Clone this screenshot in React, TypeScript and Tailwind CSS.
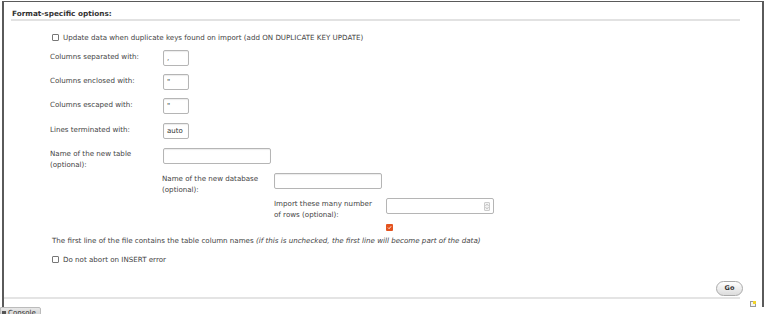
import React from 'react';

const Box = ({ className = '', value = '' }: { className?: string; value?: string }) => (
  <div
    className={`h-[16px] rounded-[2px] border border-[#b5b5b5] bg-white px-[3px] text-[7px] leading-[14px] text-[#333] shadow-[inset_0_1px_1px_rgba(0,0,0,0.08)] ${className}`}
  >
    {value}
  </div>
);

const Check = ({ checked = false }: { checked?: boolean }) =>
  checked ? (
    <div className="flex h-[7px] w-[7px] items-center justify-center rounded-[1px] bg-[#e4531f]">
      <svg width="5" height="5" viewBox="0 0 10 10">
        <path d="M2 5.2 L4.2 7.4 L8.2 2.6" stroke="white" strokeWidth="1.8" fill="none" />
      </svg>
    </div>
  ) : (
    <div className="h-[7px] w-[7px] rounded-[1px] border border-[#777] bg-white" />
  );

export default function App() {
  return (
    <div
      className="relative h-[314px] w-[768px] overflow-hidden bg-white text-[#444]"
      style={{ fontFamily: '"DejaVu Sans", "Liberation Sans", sans-serif' }}
    >
      <div className="ml-[2px] mt-[1px] h-[306px] w-[762px] border-l-2 border-r-2 border-t border-[#5a5a5a]">
        <div className="ml-[7px] mr-[22px] mt-[7px] border-b-2 border-[#e2e2e2] pb-[1px] pl-[1px] text-[7.3px] font-bold leading-[9px] text-[#333]">
          Format-specific options:
        </div>

        <div className="pl-[46px] text-[7.12px] leading-[11px]">
          <div className="mt-[11px] flex h-[10px] items-center gap-[4px] pl-[2px]">
            <Check />
            <span>Update data when duplicate keys found on import (add ON DUPLICATE KEY UPDATE)</span>
          </div>

          <div className="mt-[8px] flex h-[24px] items-start">
            <div className="w-[113px] pt-[1px]">Columns separated with:</div>
            <Box className="w-[26px]" value="," />
          </div>
          <div className="flex h-[24px] items-start">
            <div className="w-[113px] pt-[1px]">Columns enclosed with:</div>
            <Box className="w-[26px]" value={'"'} />
          </div>
          <div className="flex h-[25px] items-start">
            <div className="w-[113px] pt-[1px]">Columns escaped with:</div>
            <Box className="w-[26px]" value={'"'} />
          </div>
          <div className="flex h-[25px] items-start">
            <div className="w-[113px] pt-[1px]">Lines terminated with:</div>
            <Box className="w-[26px]" value="auto" />
          </div>
          <div className="flex h-[25px] items-start">
            <div className="w-[113px]">
              Name of the new table
              <br />
              (optional):
            </div>
            <Box className="w-[108px]" />
          </div>
          <div className="ml-[112px] flex h-[25px] items-start">
            <div className="w-[112px]">
              Name of the new database
              <br />
              (optional):
            </div>
            <Box className="w-[108px]" />
          </div>
          <div className="ml-[224px] flex h-[24px] items-start">
            <div className="w-[112px]">
              Import these many number
              <br />
              of rows (optional):
            </div>
            <div className="flex h-[16px] w-[108px] items-center justify-end rounded-[2px] border border-[#b5b5b5] bg-white pr-[3px]">
              <div className="flex h-[9px] w-[6px] flex-col items-center justify-center rounded-[1px] border border-[#ccc] bg-[#f2f2f2]">
                <svg width="4" height="7" viewBox="0 0 4 7">
                  <path d="M0.5 2.8 L2 1.2 L3.5 2.8 M0.5 4.2 L2 5.8 L3.5 4.2" stroke="#999" strokeWidth="0.6" fill="none" />
                </svg>
              </div>
            </div>
          </div>
          <div className="ml-[336px] flex h-[10px] items-center">
            <Check checked />
          </div>

          <div className="mt-[3px] h-[11px] pl-[2px]">
            The first line of the file contains the table column names{' '}
            <i>(if this is unchecked, the first line will become part of the data)</i>
          </div>

          <div className="mt-[8px] flex h-[10px] items-center gap-[4px] pl-[2px]">
            <Check />
            <span>Do not abort on INSERT error</span>
          </div>
        </div>

        <div className="mr-[19px] mt-[17px] flex justify-end">
          <button className="h-[15px] w-[27px] rounded-full border border-[#aaa] bg-gradient-to-b from-white to-[#dcdcdc] text-[6.5px] font-bold leading-[13px] text-[#333]">
            Go
          </button>
        </div>
        <div className="mr-[22px] mt-[1px] h-[2px] bg-[#e4e4e4]" />
        <div className="mr-[6px] mt-[2px] flex justify-end">
          <div className="relative h-[6px] w-[6px] border border-[#999] bg-[#f4f4f4]">
            <div className="absolute right-[-1px] top-[-1px] h-[3px] w-[3px] bg-[#f1d42a]" />
          </div>
        </div>
      </div>

      <div className="absolute bottom-[-4px] left-0 flex h-[11px] w-[41px] items-start gap-[2px] rounded-tr-[2px] border border-[#bbb] bg-gradient-to-b from-[#e8e8e8] to-[#cfcfcf] pl-[1px] pt-[1px] text-[7px] leading-[8px] text-[#333]">
        <div className="mt-[2px] h-[4px] w-[4px] bg-[#555]" />
        <span>Console</span>
      </div>
    </div>
  );
}
